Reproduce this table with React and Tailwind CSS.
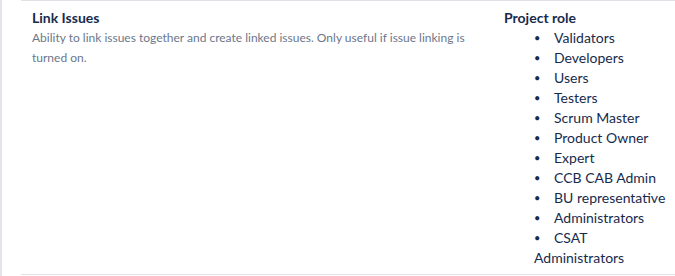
const roles = [
  "Validators",
  "Developers",
  "Users",
  "Testers",
  "Scrum Master",
  "Product Owner",
  "Expert",
  "CCB CAB Admin",
  "BU representative",
  "Administrators",
  "CSAT Administrators",
];

export default function App() {
  return (
    <div
      className="w-[675px] h-[276px] bg-white border-l-2 border-[#e4e4ea] overflow-hidden"
      style={{ fontFamily: 'Lato, "Noto Sans", sans-serif' }}
    >
      <div className="ml-[19px] flex border-t border-b border-[#dfe1e6]">
        <div className="w-[471px] shrink-0 pl-[11px] pt-[7px] pr-4">
          <div className="text-[14px] leading-5 font-bold text-[#172b4d]">Link Issues</div>
          <p className="text-[12px] leading-5 text-[#6b778c]">
            Ability to link issues together and create linked issues. Only useful if issue linking is turned on.
          </p>
        </div>
        <div className="flex-1 pl-[12px] pt-[7px] pb-[6px] pr-2 text-[#172b4d]">
          <div className="text-[14px] leading-5 font-bold">Project role</div>
          <ul className="pl-[30px] text-[14px] leading-5">
            {roles.map((r) => (
              <li key={r}>
                <span className="inline-block w-5 text-[11px] align-top">•</span>
                {r}
              </li>
            ))}
          </ul>
        </div>
      </div>
    </div>
  );
}
